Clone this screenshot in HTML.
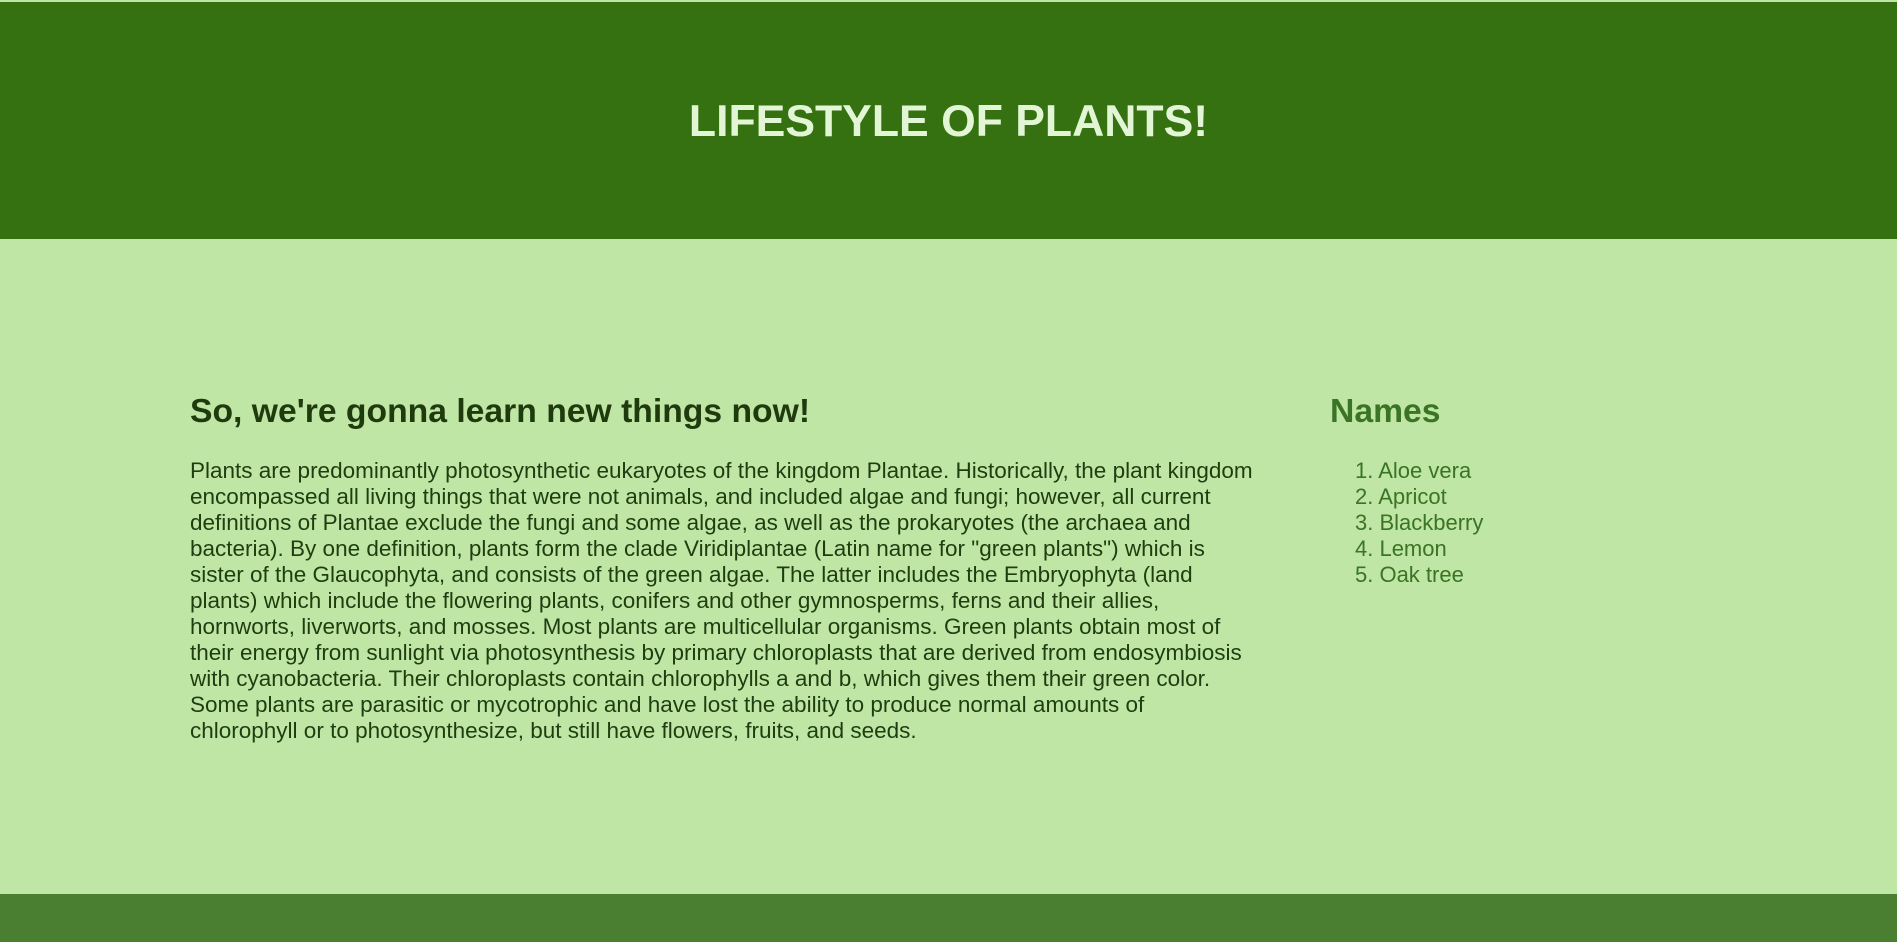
<!DOCTYPE html>
<html><head><meta charset="utf-8"><style>
html,body{margin:0;padding:0;width:1897px;height:942px;overflow:hidden;background:#bfe6a5;font-family:"Liberation Sans",Arial,sans-serif;position:relative}
.hdr{position:absolute;left:0;top:2px;width:1897px;height:237px;background:#357110}
.hdr h1{position:absolute;left:0;width:100%;top:94px;margin:0;text-align:center;font-size:44.5px;line-height:52px;color:#e2f6d6;font-weight:bold}
.ftr{position:absolute;left:0;top:894px;width:1897px;height:48px;background:#4a7f32}
h2{position:absolute;margin:0;font-size:33.7px;line-height:40px;font-weight:bold}
.h2a{left:190px;top:391px;color:#1f3b0e}
.h2b{left:1330px;top:391px;color:#3a7424}
p{position:absolute;left:190px;top:458px;width:1066px;margin:0;font-size:22.5px;line-height:26px;color:#1f3d10}
ol{position:absolute;left:1355px;top:458px;margin:0;padding:0;list-style:none;font-size:22px;line-height:26px;color:#3a7424}
</style></head><body>
<div class="hdr"><h1>LIFESTYLE OF PLANTS!</h1></div>
<h2 class="h2a">So, we're gonna learn new things now!</h2>
<p>Plants are predominantly photosynthetic eukaryotes of the kingdom Plantae. Historically, the plant kingdom encompassed all living things that were not animals, and included algae and fungi; however, all current definitions of Plantae exclude the fungi and some algae, as well as the prokaryotes (the archaea and bacteria). By one definition, plants form the clade Viridiplantae (Latin name for "green plants") which is sister of the Glaucophyta, and consists of the green algae. The latter includes the Embryophyta (land plants) which include the flowering plants, conifers and other gymnosperms, ferns and their allies, hornworts, liverworts, and mosses. Most plants are multicellular organisms. Green plants obtain most of their energy from sunlight via photosynthesis by primary chloroplasts that are derived from endosymbiosis with cyanobacteria. Their chloroplasts contain chlorophylls a and b, which gives them their green color. Some plants are parasitic or mycotrophic and have lost the ability to produce normal amounts of chlorophyll or to photosynthesize, but still have flowers, fruits, and seeds.</p>
<h2 class="h2b">Names</h2>
<ol><li>1. Aloe vera</li><li>2. Apricot</li><li>3. Blackberry</li><li>4. Lemon</li><li>5. Oak tree</li></ol>
<div class="ftr"></div>
</body></html>
